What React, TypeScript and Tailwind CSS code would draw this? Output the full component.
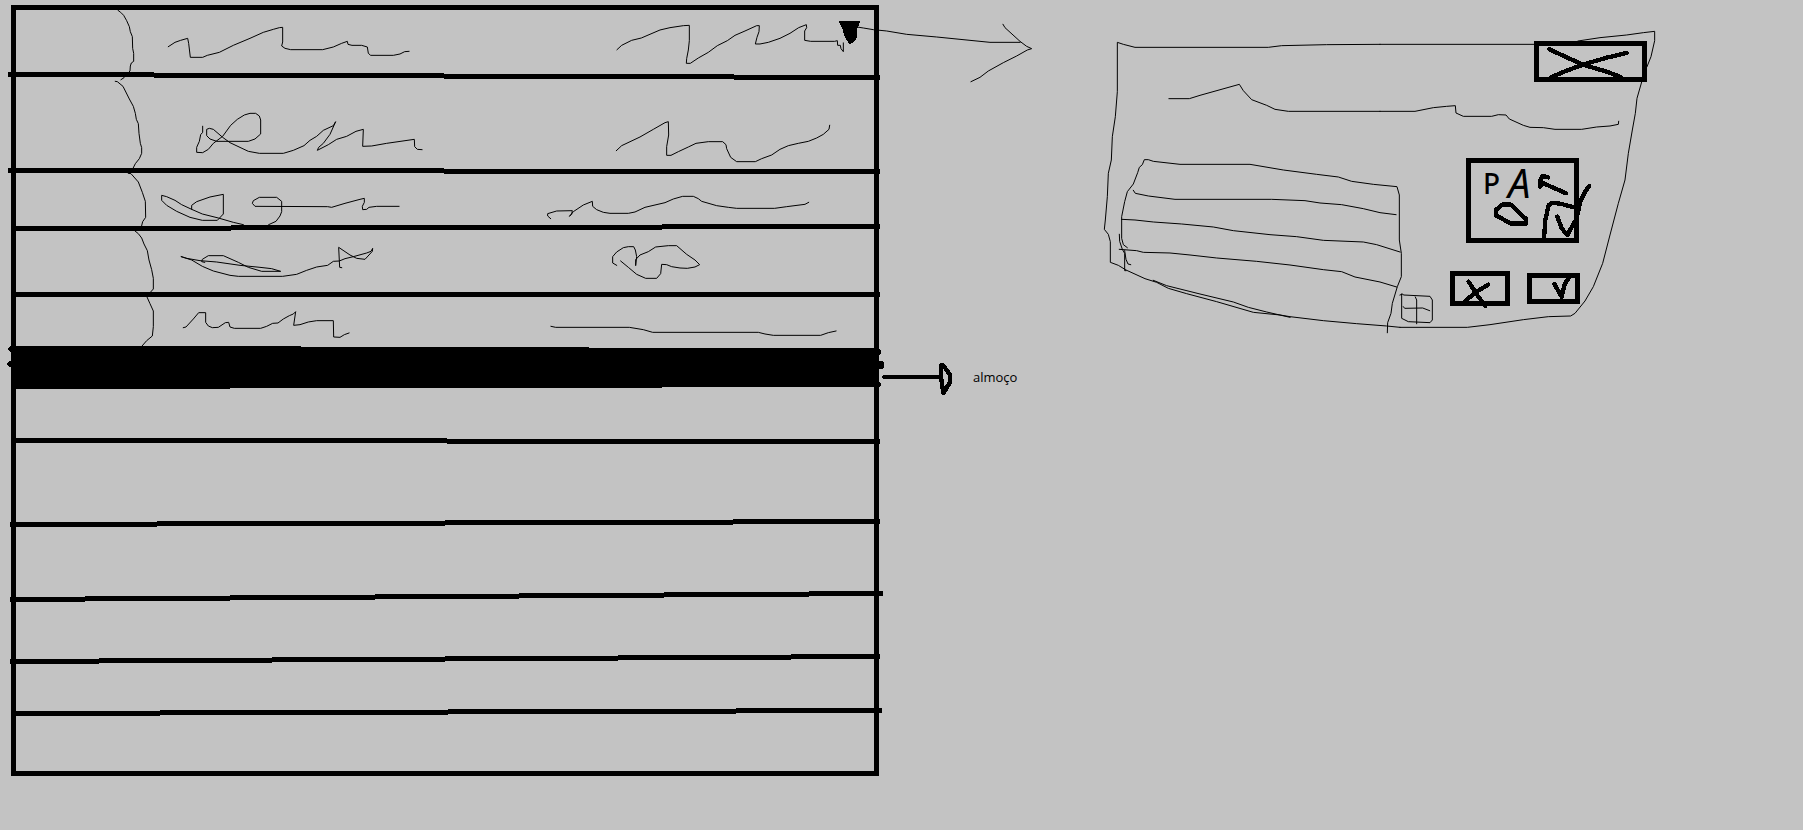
import React from "react";

type Box = [x: number, y: number, w: number, h: number];

/** A pen stroke: its points are stored at three times the page scale, from the sheet's origin. */
interface Stroke {
  at: [number, number];
  points: string;
  pen?: number;
  fill?: boolean;
}

type Step = [x1: number, x2: number, y: number];

const TL: [number, number] = [0, 0];
const TR: [number, number] = [440, 0];
const ML: [number, number] = [0, 160];
const MR: [number, number] = [440, 160];
const AR: [number, number] = [820, 0];
const DL: [number, number] = [1090, 20];
const DR: [number, number] = [1380, 20];
const LU: [number, number] = [860, 340];

const MARKER = 13;

function Sketch({ box, strokes = [], className }: { box: Box; strokes?: Stroke[]; className?: string }) {
  return (
    <svg
      viewBox={box.join(" ")}
      className={className ?? "block w-full h-auto overflow-visible"}
      shapeRendering="crispEdges"
      aria-hidden="true"
    >
      {strokes.map((s, i) => (
        <polyline
          key={i}
          points={s.points}
          transform={`translate(${s.at[0]} ${s.at[1]}) scale(0.333333)`}
          fill={s.fill ? "#000" : "none"}
          stroke={s.fill ? "none" : "#000"}
          strokeWidth={s.pen ?? 3}
          strokeLinecap={s.pen ? "round" : "square"}
          strokeLinejoin="round"
        />
      ))}
    </svg>
  );
}

function Rule({ top, steps }: { top: number; steps: Step[] }) {
  return (
    <svg
      viewBox={`16 ${top} 858 5`}
      className="relative block w-full h-auto overflow-visible"
      shapeRendering="crispEdges"
      aria-hidden="true"
    >
      {steps.map(([x1, x2, y], i) => (
        <path key={i} d={`M${x1} ${y}H${x2}`} stroke="#000" strokeWidth="5" />
      ))}
    </svg>
  );
}

interface Row {
  top: number;
  height: number;
  time?: Stroke[];
  name?: Stroke[];
  note?: Stroke[];
  action?: Stroke[];
  rule?: { top: number; steps: Step[] };
}

const morning: Row[] = [
  {
    top: 10,
    height: 63,
    time: [{ at: TL, points: "354,31 362,37 371,46 380,62 388,80 391,95 397,110 398,145 401,160 401,184 394,189 391,198 390,213 380,224 372,233 363,239" }],
    name: [{ at: TL, points: "505,140 525,127 542,121 563,115 566,130 571,172 608,172 622,166 658,157 700,136 750,115 790,97 820,88 838,83 848,82 848,126 845,138 855,145 872,149 968,149 1000,141 1025,130 1042,124 1044,133 1056,136 1085,136 1102,141 1105,160 1112,166 1180,166 1200,162 1214,155 1227,154" }],
    note: [{ at: TR, points: "531,149 545,136 575,121 604,114 660,90 690,83 730,77 748,76 748,122 745,150 740,176 739,190 751,190 775,174 805,157 832,137 862,122 885,106 915,93 950,77 958,77 957,95 951,112 946,132 960,132 985,127 1020,115 1050,100 1076,83 1099,74 1100,83 1094,93 1094,121 1112,124 1184,124 1192,122 1193,136 1201,136 1203,146 1210,155 1210,129" }],
    action: [{ at: TR, fill: true, points: "1195,63 1259,63 1259,69 1255,80 1250,88 1250,115 1236,130 1228,131 1219,120 1213,107 1207,85" }],
    rule: { top: 73, steps: [[8, 154, 74.5], [154, 444, 75.5], [444, 734, 76.5], [734, 880, 77.5]] },
  },
  {
    top: 78,
    height: 91,
    time: [{ at: TL, points: "346,244 352,245 369,259 376,273 388,297 400,319 406,340 409,358 415,371 417,400 421,430 425,443 425,460 418,476 406,491 400,503" }],
    name: [{ at: TL, points: "608,379 608,397 602,404 598,424 590,442 590,457 608,458 625,448 640,430 668,409 692,376 712,358 733,345 750,340 767,340 778,348 782,360 782,402 765,417 745,424 650,424 630,417 620,407 620,388 628,385 640,388 668,412 690,428 745,454 778,460 850,460 880,451 912,437 930,421 950,409 970,391 1000,377 1007,365 990,403 970,430 956,442 952,451 985,434 1010,418 1040,409 1068,394 1090,388 1088,439 1115,438 1160,430 1243,418 1244,440 1252,448 1266,449" }],
    note: [{ at: TR, points: "529,452 545,437 600,411 640,388 675,368 685,365 686,405 680,440 680,466 693,466 715,455 745,441 768,430 805,425 848,425 858,434 860,446 872,472 890,485 946,485 965,476 995,465 1020,448 1045,437 1075,430 1105,424 1130,414 1150,403 1167,388 1169,376" }],
    rule: { top: 169, steps: [[8, 444, 170.5], [444, 880, 171.5]] },
  },
  {
    top: 174,
    height: 51,
    time: [{ at: ML, points: "385,40 393,41 415,66 427,97 436,124 437,172 428,185 425,197" }],
    name: [
      { at: ML, points: "730,194 700,187 655,174 607,162 575,148 575,136 590,125 630,111 670,103 670,162 652,181 607,181 570,172 530,154 500,136 485,121 485,106 500,110 525,121 545,134 575,148" },
      { at: ML, points: "806,194 828,184 840,168 845,155 845,124 830,112 778,112 760,122 757,130 765,139 983,140 995,142 1035,130 1080,118 1093,115 1093,127 1087,139 1088,149 1100,148 1107,142 1130,139 1197,139" },
    ],
    note: [{ at: MR, points: "332,176 323,168 323,161 350,153 397,152 395,163 388,169 400,155 430,135 457,124 458,139 470,149 490,157 510,160 565,160 585,156 615,142 675,128 700,117 728,109 760,109 775,116 785,124 830,137 865,142 890,145 1004,145 1040,140 1095,133 1106,127" }],
    rule: { top: 225, steps: [[11, 231, 228.5], [231, 662, 227.5], [662, 880, 226.5]] },
  },
  {
    top: 230,
    height: 62,
    time: [{ at: ML, points: "405,213 415,221 425,234 432,252 442,272 447,300 455,329 460,355 460,387 451,397" }],
    name: [
      { at: ML, points: "544,290 560,295 600,302 650,306 720,316 780,322 815,326 842,334 785,334 745,322 715,307 670,287 625,287 607,298 605,305 614,307" },
      { at: ML, points: "544,290 575,300 607,319 640,333 690,346 715,349 848,349 890,343 920,331 950,321 983,316 1000,304 1018,303 1035,296 1060,290 1100,279 1113,274 1118,265 1117,274 1095,298 1070,295 1050,285 1016,262 1019,322 1025,323" },
    ],
    note: [{ at: MR, points: "530,316 518,309 518,290 530,276 550,263 565,260 581,260 586,270 590,290 587,317 587,299 600,285 625,275 647,261 685,257 710,257 740,283 765,300 779,314 765,321 742,325 720,324 695,320 680,314 665,313 662,341 650,355 617,355 590,343 565,322 542,303" }],
    rule: { top: 292, steps: [[11, 880, 294.5]] },
  },
  {
    top: 297,
    height: 50,
    time: [{ at: ML, points: "441,411 450,431 460,453 460,500 457,528 440,542 427,557" }],
    name: [{ at: ML, points: "550,503 558,501 580,477 596,458 617,458 617,487 625,498 637,503 655,502 676,488 686,487 690,501 703,505 782,505 800,499 818,490 834,489 850,477 868,467 880,462 887,455 881,496 900,494 925,486 950,482 1000,482 1001,531 1020,532 1033,524 1047,519" }],
    note: [{ at: MR, points: "333,499 347,502 568,502 610,509 638,517 955,517 975,522 1000,526 1142,526 1165,518 1188,513" }],
  },
];

const afternoon: Row[] = [
  { top: 388, height: 50, rule: { top: 438, steps: [[11, 447, 440.5], [447, 880, 441.5]] } },
  { top: 443, height: 77, rule: { top: 520, steps: [[10, 157, 524.5], [157, 445, 523.5], [445, 733, 522.5], [733, 880, 521.5]] } },
  { top: 525, height: 69, rule: { top: 594, steps: [[10, 85, 599.5], [85, 230, 598.5], [230, 375, 597.5], [375, 519, 596.5], [519, 664, 595.5], [664, 809, 594.5], [809, 883, 593.5]] } },
  { top: 599, height: 58, rule: { top: 657, steps: [[10, 99, 661.5], [99, 272, 660.5], [272, 445, 659.5], [445, 618, 658.5], [618, 791, 657.5], [791, 880, 656.5]] } },
  { top: 662, height: 47, rule: { top: 709, steps: [[11, 160, 713.5], [160, 448, 712.5], [448, 736, 711.5], [736, 882, 710.5]] } },
  { top: 714, height: 57 },
];

function ScheduleRow({ row }: { row: Row }) {
  const { top, height } = row;
  return (
    <li>
      <div className="grid grid-cols-[134fr_350fr_332fr_42fr]">
        <Sketch box={[16, top, 134, height]} strokes={row.time} />
        <Sketch box={[150, top, 350, height]} strokes={row.name} />
        <Sketch box={[500, top, 332, height]} strokes={row.note} />
        {row.action && (
          <button type="button" aria-label="Abrir" className="block">
            <Sketch box={[832, top, 42, height]} strokes={row.action} />
          </button>
        )}
      </div>
      {row.rule && <Rule top={row.rule.top} steps={row.rule.steps} />}
    </li>
  );
}

function LunchBand() {
  return (
    <li>
      <svg viewBox="16 347 858 41" className="block h-auto w-full overflow-visible" shapeRendering="crispEdges" aria-hidden="true">
        <path d="M11 346H301V347H589V348H879V387H662V388H230V389H11Z" />
        <path d="M11 346H10L8 348V350L10 352H11ZM11 361H10L7 363V365L10 367H11Z" />
        <path d="M879 349H880L881 351V353L880 355H879ZM879 361H882L884 363V367L883 369H879ZM879 382L881 384V386L879 387Z" />
      </svg>
    </li>
  );
}

function Schedule() {
  return (
    <ol className="self-start border-[5px] border-black">
      {morning.map((row) => (
        <ScheduleRow key={row.top} row={row} />
      ))}
      <LunchBand />
      {afternoon.map((row) => (
        <ScheduleRow key={row.top} row={row} />
      ))}
    </ol>
  );
}

const frame: Stroke[] = [
  { at: DL, points: "870,73 710,74 575,77 535,82 135,82 100,73 82,67 82,215 76,290 67,350 64,420 55,460 52,530 46,600 43,628 55,643 61,665 61,727 85,736 108,750 165,776 200,787 235,805 290,821 380,845 490,877 570,885 600,890 700,902 800,911 890,918 930,922" },
  { at: DL, points: "190,781 230,797 330,822 430,846 475,862 530,876 600,892" },
  { at: DR, points: "60,922 262,922 330,914 430,899 505,890 572,888 585,880 615,843 640,800 668,730 690,645 715,550 735,480 745,400 757,330 766,280 771,235 785,186" },
  { at: DR, points: "0,73 462,73" },
  { at: DR, points: "594,63 660,53 740,45 790,38 824,34 824,62 813,110 801,140" },
];

const title: Stroke[] = [
  { at: DL, points: "237,236 298,236 330,226 448,193 460,212 485,239 530,256 555,268 595,274 870,274" },
  { at: DR, points: "0,274 105,274 160,263 200,259 226,257 228,279 250,289 335,289 355,284 378,285 388,297 430,316 450,322 490,323 525,328 605,328 650,321 690,318 715,313 716,304" },
];

const list: Stroke[] = [
  { at: DL, points: "112,683 100,674 95,655 95,590 104,545 112,515 130,492 143,458 148,442 157,434 163,419 175,419 190,424 270,433 480,433 580,450 680,463 745,471 785,484 850,493 921,500 928,525 928,660 934,700 934,770 922,800 907,850 903,880 893,908 892,938" },
  { at: DL, points: "130,511 136,520 175,528 255,538 545,538 645,542 690,549 755,554 820,566 870,578 918,584" },
  { at: DL, points: "95,598 135,600 190,606 275,612 370,621 430,632 540,644 620,650 700,661 820,666 860,674 930,696" },
  { at: DL, points: "88,688 140,692 160,697 240,699 300,705 380,714 500,724 600,735 700,749 755,755 795,771 870,786 920,801" },
  { at: DL, points: "88,643 89,664 97,688 104,700 104,752 108,752" },
  { at: DL, points: "104,692 108,718 114,732 122,734" },
];

function Dialog() {
  return (
    <section aria-label="Detalhes" className="relative mt-[26px] pt-[10px]">
      <Sketch box={[1104, 31, 551, 302]} strokes={frame} className="pointer-events-none absolute inset-0 h-full w-full overflow-visible" />
      <header className="flex justify-end pr-2">
        <button type="button" aria-label="Fechar" className="relative h-[41px] w-[113px] border-[5px] border-black">
          <Sketch
            box={[1539, 46, 103, 31]}
            strokes={[
              { at: DR, pen: MARKER, points: "508,88 560,112 612,135 680,155 722,171" },
              { at: DR, pen: MARKER, points: "514,171 560,152 612,133 680,113 740,99" },
            ]}
          />
        </button>
      </header>
      <div className="mt-[2px] ml-[65px] mr-9">
        <Sketch box={[1169, 84, 450, 46]} strokes={title} />
      </div>
      <div className="mt-7 mr-[75px] ml-[15px] flex items-start">
        <div className="flex-1">
          <Sketch box={[1119, 158, 282, 175]} strokes={list} />
        </div>
        <button type="button" aria-label="Adicionar" className="mb-[10px] w-8 self-end">
          <Sketch
            box={[1401, 294, 32, 29]}
            strokes={[
              { at: DR, points: "60,825 68,822 70,825 150,829 157,840 157,900 150,908 85,905 65,895 65,822" },
              { at: DR, points: "106,831 110,840 110,911" },
              { at: DR, points: "70,860 74,865 128,864 149,872" },
            ]}
          />
        </button>
        <div className="ml-[17px] w-[130px]">
          <label className="relative ml-4 flex h-[85px] w-[113px] items-start border-[5px] border-black pl-3 font-['Noto_Sans',sans-serif]">
            <span className="pt-1 text-[28px] leading-8 font-medium">P</span>
            <span className="ml-2 text-[40px] leading-10 italic">A</span>
            <Sketch
              box={[1471, 163, 103, 75]}
              className="pointer-events-none absolute inset-0 h-full w-full overflow-visible"
              strokes={[
                { at: DR, pen: MARKER, points: "505,472 488,468 481,480 481,500 490,490 520,503 558,520" },
                { at: DR, pen: MARKER, points: "348,570 365,554 392,554 415,575 438,597 438,611 393,611 348,586 348,570" },
                { at: DR, pen: MARKER, points: "492,655 496,600 506,555 518,548 545,552 590,564" },
                { at: DR, pen: MARKER, points: "532,590 545,625 562,645 590,595 600,548 615,515 628,498" },
              ]}
            />
            <input type="checkbox" defaultChecked className="absolute right-0 bottom-0 h-9 w-8 appearance-none" />
          </label>
          <div className="mt-7 flex items-center justify-between">
            <button type="button" aria-label="Cancelar" className="h-[35px] w-[60px] border-[5px] border-black">
              <Sketch
                box={[1455, 276, 50, 25]}
                strokes={[
                  { at: DR, pen: MARKER, points: "266,785 290,823 316,858" },
                  { at: DR, pen: MARKER, points: "325,794 290,815 256,842" },
                ]}
              />
            </button>
            <button type="button" aria-label="Confirmar" className="h-[31px] w-[53px] border-[5px] border-black">
              <Sketch box={[1532, 278, 43, 21]} strokes={[{ at: DR, pen: MARKER, points: "523,792 545,830 555,790 568,772" }]} />
            </button>
          </div>
        </div>
      </div>
    </section>
  );
}

export default function App() {
  return (
    <main className="grid min-h-screen grid-cols-[868fr_924fr] bg-[#c3c3c3] pt-[5px] pb-8 pl-[11px] text-black">
      <Schedule />
      <div>
        <div className="grid grid-cols-[225fr_551fr_148fr]">
          <div className="mt-[26px]">
            <Sketch
              box={[879, 31, 225, 60]}
              strokes={[
                { at: AR, points: "105,80 130,84 160,89 200,93 260,103 350,111 450,121 510,127 600,127" },
                { at: AR, points: "549,73 555,83 600,124 620,139 635,146 622,150 590,168 550,188 505,213 480,232 453,245" },
              ]}
            />
          </div>
          <Dialog />
        </div>
        <div className="mt-[30px] flex items-center gap-5 pl-1">
          <div className="w-[70px]">
            <Sketch
              box={[883, 363, 70, 32]}
              strokes={[
                { at: LU, pen: MARKER, points: "73,112 240,112" },
                { at: LU, pen: MARKER, points: "243,76 243,110 250,160 271,125 270,105 250,76 243,76" },
              ]}
            />
          </div>
          <p className="pb-1 font-['Open_Sans',sans-serif] text-[13px] leading-4">almoço</p>
        </div>
      </div>
    </main>
  );
}
